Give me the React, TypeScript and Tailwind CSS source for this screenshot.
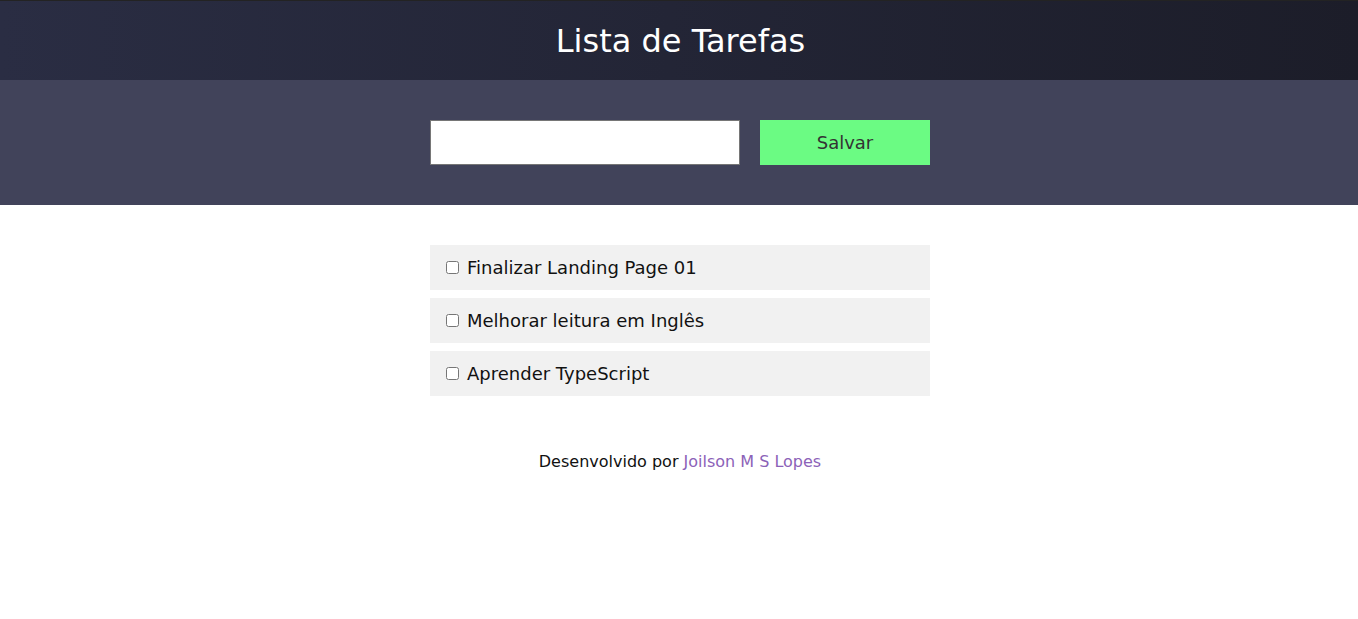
export default function App() {
  const tasks = ['Finalizar Landing Page 01', 'Melhorar leitura em Inglês', 'Aprender TypeScript'];

  return (
    <div className="min-h-screen bg-white font-['DejaVu_Sans',sans-serif]">
      <header className="h-20 border-t border-[#232323] bg-gradient-to-r from-[#2a2d43] to-[#1c1d29] flex items-center justify-center pl-[3px]">
        <h1 className="text-[32px] text-white">Lista de Tarefas</h1>
      </header>

      <section className="h-[125px] bg-[#41435a] flex items-center justify-center gap-5 pl-[2px]">
        <input type="text" className="w-[310px] h-[45px] bg-white border border-[#767676] outline-none px-2" />
        <button className="w-[170px] h-[45px] bg-[#6bfb83] text-[#333] text-lg">Salvar</button>
      </section>

      <main className="flex flex-col items-center pt-10 gap-2 pl-[2px]">
        {tasks.map((t) => (
          <label key={t} className="w-[500px] h-[45px] bg-[#f1f1f1] flex items-center pl-4 gap-2 text-lg text-[#111]">
            <input type="checkbox" className="w-[13px] h-[13px]" />
            {t}
          </label>
        ))}
      </main>

      <footer className="mt-[54px] text-center text-base text-[#111] pl-[2px]">
        Desenvolvido por <a className="text-[#8c62b8]">Joilson M S Lopes</a>
      </footer>
    </div>
  );
}
